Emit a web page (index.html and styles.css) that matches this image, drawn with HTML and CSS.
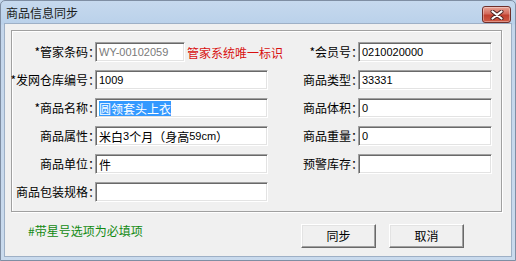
FILE: index.html
```html
<!DOCTYPE html>
<html lang="zh-CN">
<head>
<meta charset="utf-8">
<title>商品信息同步</title>
<link rel="stylesheet" href="styles.css">
</head>
<body>
<div class="window">
  <div class="titlebar">
    <span class="title">商品信息同步</span>
    <div class="close">
      <svg width="14" height="10" viewBox="0 0 14 10">
        <path d="M2.5 1.5 L11.5 8.5 M11.5 1.5 L2.5 8.5" stroke="#4a2020" stroke-width="4" stroke-linecap="round"/>
        <path d="M2.5 1.5 L11.5 8.5 M11.5 1.5 L2.5 8.5" stroke="#ffffff" stroke-width="2.2" stroke-linecap="round"/>
      </svg>
    </div>
  </div>
  <div class="client">
    <div class="group">
      <div class="form">
        <div class="label">*管家条码：</div>
        <div class="cell"><div class="field lat readonly short">WY-00102059</div><span class="hint">管家系统唯一标识</span></div>
        <div class="label">*会员号：</div>
        <div class="field lat">0210020000</div>

        <div class="label">*发网仓库编号：</div>
        <div class="field lat">1009</div>
        <div class="label">商品类型：</div>
        <div class="field lat">33331</div>

        <div class="label">*商品名称：</div>
        <div class="field"><span class="selected">圆领套头上衣</span></div>
        <div class="label">商品体积：</div>
        <div class="field lat">0</div>

        <div class="label">商品属性：</div>
        <div class="field">米白<span class="lat">3</span>个月（身高<span class="lat">59cm</span>）</div>
        <div class="label">商品重量：</div>
        <div class="field lat">0</div>

        <div class="label">商品单位：</div>
        <div class="field">件</div>
        <div class="label">预警库存：</div>
        <div class="field"></div>

        <div class="label">商品包装规格：</div>
        <div class="field"></div>
      </div>
    </div>
    <div class="footer">
      <span class="note">#带星号选项为必填项</span>
      <div class="buttons">
        <button class="btn">同步</button>
        <button class="btn">取消</button>
      </div>
    </div>
  </div>
</div>
</body>
</html>
```

FILE: styles.css
```css
* { box-sizing: border-box; }
html, body { margin: 0; padding: 0; }
body {
  width: 516px;
  height: 261px;
  overflow: hidden;
  font-family: "Noto Sans CJK SC", sans-serif;
  font-size: 12px;
  color: #000;
  background: #c4d7ec;
}
.window {
  width: 516px;
  height: 261px;
  display: flex;
  flex-direction: column;
  padding: 0 3px 3px 3px;
  background: linear-gradient(#c6d9ee, #bad1ea 23px, #c4d6eb 24px, #c9daed);
  border: 1px solid #7f8ea3;
  border-radius: 5px 5px 0 0;
}
.titlebar {
  height: 22px;
  display: flex;
  align-items: center;
  justify-content: space-between;
  flex: none;
}
.title {
  padding-left: 2px;
  font-size: 12px;
  line-height: 16px;
  color: #1a1a1a;
  margin-top: 1px;
}
.close {
  width: 29px;
  height: 17px;
  margin-top: 5px;
  margin-right: 1px;
  border: 1px solid #6e2f2b;
  border-radius: 3px;
  background: linear-gradient(#e8a396, #d36a5c 45%, #c1402f 55%, #cf5a45);
  box-shadow: inset 0 0 0 1px rgba(255,255,255,0.35);
  display: flex;
  align-items: center;
  justify-content: center;
}
.close svg { display: block; }
.client {
  flex: 1;
  background: #f0f0f0;
  border: 1px solid #9eb0c6;
  display: flex;
  flex-direction: column;
}
.group {
  margin: 6px 0 0 6px;
  width: 491px;
  height: 182px;
  border: 1px solid #a0a0a0;
  box-shadow: inset 1px 1px 0 #fff, 1px 1px 0 #fff;
  padding-top: 11px;
}
.form {
  display: grid;
  grid-template-columns: 83px 173px 90px 134px;
  grid-auto-rows: 20px;
  row-gap: 8px;
}
.label {
  display: flex;
  align-items: center;
  justify-content: flex-end;
  white-space: nowrap;
  margin-right: -5px;
  line-height: 16px;
}
.cell {
  display: flex;
  align-items: center;
  gap: 2px;
  white-space: nowrap;
  position: relative;
  z-index: 1;
}
.field {
  position: relative;
  z-index: 1;
  height: 20px;
  background: #fff;
  border-top: 1px solid #a0a0a0;
  border-left: 1px solid #a0a0a0;
  border-bottom: 1px solid #fff;
  border-right: 1px solid #fff;
  box-shadow: inset 1px 1px 0 #696969, inset -1px -1px 0 #e3e3e3;
  padding-left: 3px;
  display: flex;
  align-items: center;
  white-space: nowrap;
  overflow: hidden;
  font-size: 12px;
  line-height: 15px;
}
.lat, .field.lat {
  font-family: "Liberation Sans", "Noto Sans CJK SC", sans-serif;
  font-size: 11px;
}
.field.readonly { color: #7a7a7a; }
.field.short { width: 90px; flex: none; }
.hint { color: #d81010; }
.selected {
  background: #3399ff;
  color: #fff;
  line-height: 15px;
  display: inline-block;
}
.footer {
  display: flex;
  align-items: flex-start;
  padding-left: 23px;
}
.note {
  color: #128a12;
  margin-top: 11px;
  line-height: 16px;
  flex: 1;
}
.buttons {
  display: flex;
  gap: 13px;
  margin-top: 12px;
  margin-right: 47px;
}
.btn {
  width: 75px;
  height: 24px;
  font-family: "Noto Sans CJK SC", sans-serif;
  font-size: 12px;
  color: #000;
  background: #f0f0f0;
  border-top: 1px solid #fff;
  border-left: 1px solid #fff;
  border-bottom: 1px solid #696969;
  border-right: 1px solid #696969;
  box-shadow: inset -1px -1px 0 #a0a0a0, inset 1px 1px 0 #e3e3e3;
  padding: 0;
  margin: 0;
  line-height: 16px;
}
```
